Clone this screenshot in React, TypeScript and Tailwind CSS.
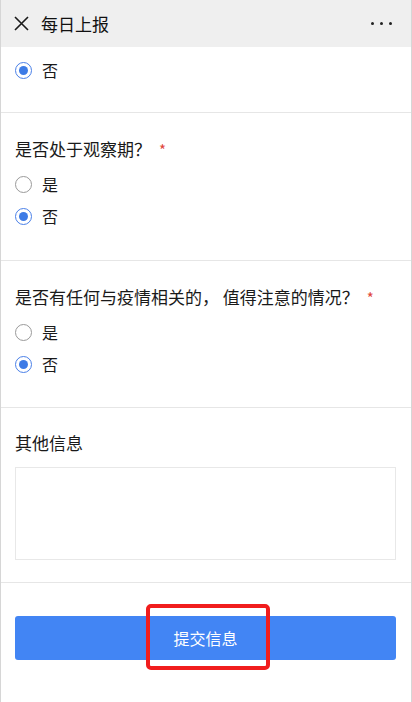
import React from "react";

const font = { fontFamily: '"Noto Sans CJK SC", "Noto Sans", sans-serif' };

function Radio({ label, checked }: { label: string; checked?: boolean }) {
    return (
        <div className="flex items-center h-8 gap-[10px]">
            <span
                className={
                    checked
                        ? "w-[17px] h-[17px] rounded-full border border-[#4a80e8] flex items-center justify-center"
                        : "w-[17px] h-[17px] rounded-full border border-[#9a9a9a]"
                }
            >
                {checked && <span className="w-[9px] h-[9px] rounded-full bg-[#3d7be6]" />}
            </span>
            <span className="text-[16px] text-[#1a1a1a] leading-6">{label}</span>
        </div>
    );
}

function Question({ title, required }: { title: string; required?: boolean }) {
    return (
        <div className="flex items-center h-6 text-[17px] text-[#1a1a1a]">
            <span>{title}</span>
            {required && <span className="ml-[8px] text-[15px] text-[#e0463b] leading-none">*</span>}
        </div>
    );
}

export default function App() {
    return (
        <div className="w-[412px] h-[702px] bg-white border-l border-r border-[#d6d6d6] overflow-hidden" style={font}>
            <div className="h-[47px] bg-[#efefef] flex items-center pl-[13px] pr-[19px]">
                <svg width="15" height="15" viewBox="0 0 15 15" className="shrink-0">
                    <path d="M1 1 L14 14 M14 1 L1 14" stroke="#1a1a1a" strokeWidth="1.6" fill="none" />
                </svg>
                <span className="ml-[12px] text-[17px] text-[#111] leading-6">每日上报</span>
                <div className="ml-auto flex gap-[6px]">
                    <span className="w-[3px] h-[3px] rounded-full bg-[#222]" />
                    <span className="w-[3px] h-[3px] rounded-full bg-[#222]" />
                    <span className="w-[3px] h-[3px] rounded-full bg-[#222]" />
                </div>
            </div>

            <div className="pl-[14px] pr-[15px] pt-[7px] pb-[26px] border-b border-[#e6e6e6]">
                <Radio label="否" checked />
            </div>

            <div className="pl-[14px] pr-[15px] pt-[24px] pb-[28px] border-b border-[#e6e6e6]">
                <Question title="是否处于观察期？" required />
                <div className="mt-[7px]">
                    <Radio label="是" />
                    <Radio label="否" checked />
                </div>
            </div>

            <div className="pl-[14px] pr-[15px] pt-[24px] pb-[27px] border-b border-[#e6e6e6]">
                <Question title="是否有任何与疫情相关的， 值得注意的情况？" required />
                <div className="mt-[7px]">
                    <Radio label="是" />
                    <Radio label="否" checked />
                </div>
            </div>

            <div className="pl-[14px] pr-[15px] pt-[23px] pb-[22px] border-b border-[#e6e6e6]">
                <Question title="其他信息" />
                <div className="mt-[12px] h-[93px] border border-[#e8e8e8] bg-white" />
            </div>

            <div className="pl-[14px] pr-[15px] pt-[33px]">
                <div className="relative h-[44px] rounded-[3px] bg-[#4285f4] flex items-center justify-center">
                    <span className="text-[16px] text-white">提交信息</span>
                    <div className="absolute left-[131px] top-[-12px] w-[124px] h-[66px] border-[4px] border-[#f11d1d] rounded-[5px]" />
                </div>
            </div>
        </div>
    );
}
